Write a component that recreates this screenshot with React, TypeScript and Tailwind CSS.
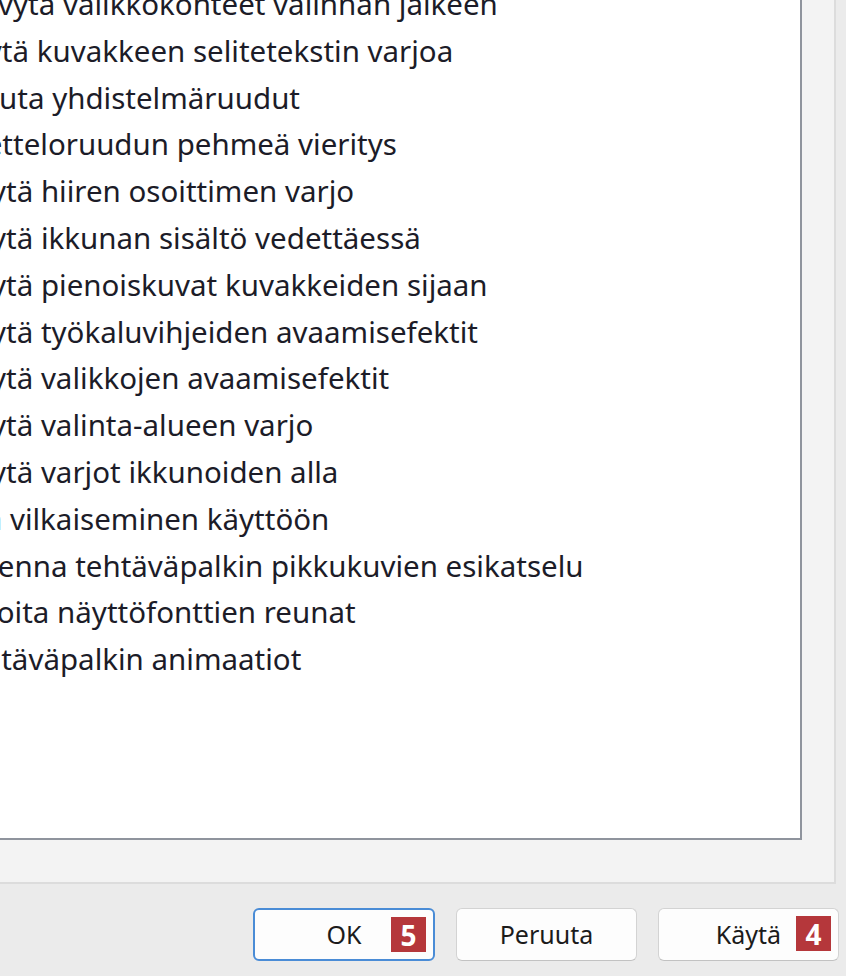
import React from 'react';

const OPTIONS = [
  'Häivytä valikkokohteet valinnan jälkeen',
  'Käytä kuvakkeen selitetekstin varjoa',
  "Liu'uta yhdistelmäruudut",
  'Luetteloruudun pehmeä vieritys',
  'Näytä hiiren osoittimen varjo',
  'Näytä ikkunan sisältö vedettäessä',
  'Näytä pienoiskuvat kuvakkeiden sijaan',
  'Näytä työkaluvihjeiden avaamisefektit',
  'Näytä valikkojen avaamisefektit',
  'Näytä valinta-alueen varjo',
  'Näytä varjot ikkunoiden alla',
  'Ota vilkaiseminen käyttöön',
  'Tallenna tehtäväpalkin pikkukuvien esikatselu',
  'Tasoita näyttöfonttien reunat',
  'Tehtäväpalkin animaatiot',
];

function Badge({ n }: { n: number }) {
  return (
    <span className="absolute top-[7px] right-[7px] w-[35px] h-[35px] bg-[#b5373b] text-white flex items-center justify-center text-[28px] font-bold leading-none">
      {n}
    </span>
  );
}

function DialogButton({
  label,
  primary,
  badge,
}: {
  label: string;
  primary?: boolean;
  badge?: number;
}) {
  return (
    <button
      className={
        primary
          ? 'relative w-[182px] h-[53px] rounded-[6px] bg-[#fdfdfd] border-2 border-[#4a8cd6] text-[25px] text-[#1b1b1b]'
          : 'relative w-[181px] h-[53px] rounded-[6px] bg-[#fdfdfd] border border-[#d3d3d3] border-b-[#c2c2c2] text-[25px] text-[#1b1b1b]'
      }
    >
      {label}
      {badge !== undefined && <Badge n={badge} />}
    </button>
  );
}

export default function App() {
  return (
    <div
      className="w-[846px] h-[976px] bg-[#ebebeb] overflow-hidden"
      style={{ fontFamily: '"Noto Sans", "Open Sans", sans-serif' }}
    >
      <div className="w-[836px] h-[884px] bg-[#f3f3f3] border-r-2 border-b-2 border-[#dcdcdc] pr-[32px] pb-[42px]">
        <div className="h-full bg-white border-r-2 border-b-2 border-[#8f949d] overflow-hidden">
          {/* list is scrolled / cropped: checkboxes sit left of the visible area */}
          <ul className="-mt-[19px] -ml-[86px]">
            {OPTIONS.map((opt) => (
              <li
                key={opt}
                className="flex items-center gap-[10px] h-[46.8px] text-[29.5px] leading-[46.8px] text-[#1c1c28] whitespace-nowrap"
              >
                <span className="w-[28px] h-[28px] border-2 border-[#333] rounded-[4px] shrink-0" />
                <span>{opt}</span>
              </li>
            ))}
          </ul>
        </div>
      </div>
      <div className="flex justify-end gap-[21px] pr-[7px] pt-[24px]">
        <DialogButton label="OK" primary badge={5} />
        <DialogButton label="Peruuta" />
        <DialogButton label="Käytä" badge={4} />
      </div>
    </div>
  );
}
